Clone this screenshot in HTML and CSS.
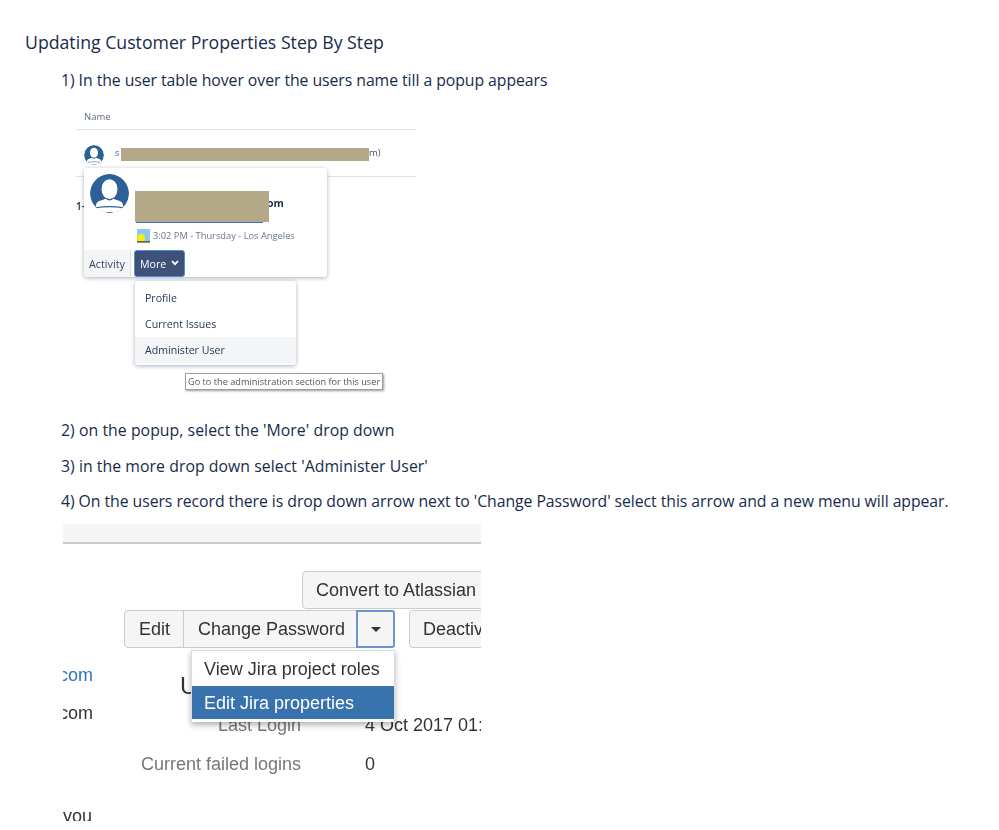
FILE: index.html
```html
<!DOCTYPE html>
<html lang="en">
<head>
<meta charset="utf-8">
<title>Updating Customer Properties Step By Step</title>
<link rel="stylesheet" href="styles.css">
</head>
<body>
<main class="doc">
  <p class="title">Updating Customer Properties Step By Step</p>
  <p class="step first">1) In the user table hover over the users name till a popup appears</p>

  <figure class="shot-one">
    <div class="th">Name</div>
    <div class="row">
      <svg class="avatar-sm" viewBox="0 0 40 40"><use href="#person"/></svg>
      <span class="user-link">s</span><span class="user-end">m)</span>
    </div>
    <div class="row-two">1-</div>
    <span class="redact redact-a"></span>

    <div class="card">
      <svg class="avatar-lg" viewBox="0 0 40 40">
        <defs>
          <clipPath id="disc"><circle cx="20" cy="20" r="20"/></clipPath>
          <g id="person" clip-path="url(#disc)">
            <circle cx="20" cy="20" r="20" fill="#2c6197"/>
            <ellipse cx="20" cy="15.5" rx="8.2" ry="10.2" fill="#fff"/>
            <path d="M6 39V33Q6 28 12 27L16 25.5Q20 29 24 25.5L28 27Q34 28 34 33V39Z" fill="#fff"/>
            <path d="M6 34Q20 31.5 34 34V35Q20 33 6 35Z" fill="#2c6197"/>
          </g>
        </defs>
        <use href="#person"/>
      </svg>
      <span class="card-end">om</span>
      <span class="card-mail"></span>
      <span class="redact redact-b"></span>
      <div class="card-time">
        <svg class="weather" viewBox="0 0 13 14"><rect width="13" height="14" fill="#8cc8ee"/><circle cx="4" cy="9" r="4" fill="#f2ee12"/><rect y="12" width="13" height="1.5" fill="#6b6a2a"/></svg>
        <span>3:02 PM - Thursday - Los Angeles</span>
      </div>
      <div class="card-actions">
        <span class="activity">Activity</span>
        <span class="more">More
          <svg class="chev" viewBox="0 0 8 6"><path d="M1 1.2 4 4.2 7 1.2" fill="none" stroke="#fff" stroke-width="1.8"/></svg>
        </span>
      </div>
    </div>

    <ul class="more-menu">
      <li>Profile</li>
      <li>Current Issues</li>
      <li class="hover">Administer User</li>
    </ul>
    <div class="tip">Go to the administration section for this user</div>
  </figure>

  <p class="step second">2) on the popup, select the 'More' drop down</p>
  <p class="step third">3) in the more drop down select 'Administer User'</p>
  <p class="step fourth">4) On the users record there is drop down arrow next to 'Change Password' select this arrow and a new menu will appear.</p>

  <figure class="shot-two">
    <div class="bar"></div>
    <div class="btn-row top"><span class="btn convert">Convert to Atlassian</span></div>
    <div class="btn-row">
      <span class="btn edit">Edit</span>
      <span class="btn change">Change Password</span>
      <span class="btn caret-btn"><i class="caret"></i></span>
      <span class="btn deact">Deactiv</span>
    </div>
    <span class="peek blue p1">com</span>
    <span class="peek p2">com</span>
    <span class="peek heading-u">U</span>
    <dl class="info">
      <div class="info-row"><dt>Last Login</dt><dd>4 Oct 2017 01:</dd></div>
      <div class="info-row"><dt>Current failed logins</dt><dd>0</dd></div>
    </dl>
    <span class="peek you">you</span>
    <ul class="jira-menu">
      <li>View Jira project roles</li>
      <li class="active">Edit Jira properties</li>
    </ul>
  </figure>
</main>
</body>
</html>
```

FILE: styles.css
```css
* { box-sizing: border-box; }
html, body { margin: 0; padding: 0; background: #fff; }
body { height: 830px; overflow: hidden; font-family: "Open Sans", "Noto Sans", sans-serif; color: #172b4d; }
.doc { padding: 30px 0 0 25px; }
p { margin: 0; }
.title { font-size: 17.7px; line-height: 24px; }
.step { font-size: 15.8px; line-height: 24px; margin: 12px 0 0 36px; letter-spacing: -0.06px; white-space: nowrap; }
.step.first { margin-top: 14px; }
.step.second { margin-top: 20px; letter-spacing: 0.05px; }
.step.third { letter-spacing: 0.05px; }
.step.fourth { margin-top: 11px; }

figure { margin: 0; position: relative; filter: blur(0.3px); }

/* first picture */
.shot-one { width: 340px; height: 293px; margin: 13px 0 0 51px; font-size: 10.4px; color: #42526e; }
.th { height: 25px; padding: 7px 0 0 8px; line-height: 10px; font-size: 9.5px; color: #5e6c84; border-bottom: 1px solid #dfe1e6; }
.row { height: 47px; position: relative; border-bottom: 1px solid #dfe1e6; }
.avatar-sm { position: absolute; left: 8px; top: 15px; width: 20px; height: 20px; }
.user-link { position: absolute; left: 39px; top: 16px; color: #3a6fc0; font-size: 9.5px; line-height: 14px; }
.user-end { position: absolute; left: 293px; top: 16px; font-size: 9.5px; line-height: 14px; }
.row-two { position: absolute; left: 0; top: 94px; font-size: 10px; font-weight: 600; color: #172b4d; }
.redact { position: absolute; background: #b3a888; }
.redact-a { left: 45px; top: 43px; width: 248px; height: 13px; }
.card { position: absolute; left: 8px; top: 63px; width: 243px; height: 109px; background: #fff; border-radius: 3px; box-shadow: 0 1px 4px rgba(9,30,66,.35); }
.avatar-lg { position: absolute; left: 6px; top: 6px; width: 39px; height: 39px; }
.card-end { position: absolute; left: 183px; top: 27px; font-size: 10.5px; line-height: 16px; font-weight: 700; color: #172b4d; }
.card-mail { position: absolute; left: 52px; top: 54px; width: 127px; height: 1px; background: #3a6fc0; }
.redact-b { left: 51px; top: 23px; width: 134px; height: 31px; }
.card-time { position: absolute; left: 53px; top: 61px; display: flex; align-items: center; gap: 3px; font-size: 9.3px; line-height: 14px; color: #6b778c; white-space: nowrap; }
.weather { width: 13px; height: 14px; display: block; }
.card-actions { position: absolute; left: 0; bottom: 0; height: 27px; display: flex; gap: 3px; }
.activity { width: 47px; background: #f4f5f7; border-radius: 0 0 0 3px; border-right: 1px solid #dfe1e6; font-size: 10.8px; line-height: 28px; padding-left: 5px; color: #344563; }
.more { width: 51px; background: #3d5179; border: 1px solid #4a90e2; border-radius: 3px; color: #fff; font-size: 10.6px; line-height: 25px; padding: 1px 0 0 5px; display: flex; align-items: center; gap: 5px; }
.chev { width: 8px; height: 6px; display: block; margin-top: -2px; }
.more-menu { position: absolute; left: 59px; top: 176px; width: 161px; height: 84px; margin: 0; padding: 4px 0; list-style: none; background: #fff; border-radius: 3px; box-shadow: 0 1px 4px rgba(9,30,66,.35); font-size: 10.6px; color: #253858; }
.more-menu li { height: 26px; line-height: 26px; padding-left: 10px; }
.more-menu .hover { background: #f4f5f7; }
.tip { position: absolute; left: 109px; top: 268px; width: 198px; height: 17px; background: #fff; border: 1px solid #a0a0a0; box-shadow: 1px 1px 2px rgba(0,0,0,.4); font-size: 9.2px; line-height: 16px; padding-left: 2px; color: #575757; white-space: nowrap; }

/* second picture */
.shot-two { width: 418px; height: 297px; margin: 11px 0 0 38px; overflow: hidden; font-family: "Liberation Sans", Arial, sans-serif; font-size: 18px; color: #333; }
.bar { height: 20px; background: #f5f5f5; border-bottom: 2px solid #ccc; }
.btn-row { display: flex; height: 38px; margin-top: 1px; }
.btn-row.top { margin-top: 27px; justify-content: flex-start; padding-left: 239px; }
.btn { display: block; flex: none; height: 38px; line-height: 36px; background: #f5f5f5; border: 1px solid #ccc; white-space: nowrap; }
.convert { width: 190px; padding-left: 13px; border-radius: 4px 0 0 4px; }
.edit { margin-left: 61px; width: 60px; padding-left: 14px; border-radius: 4px 0 0 4px; }
.change { width: 174px; margin-left: -1px; padding-left: 14px; }
.caret-btn { width: 39px; margin-left: -1px; border: 2px solid #6f94d2; background: #f5f5f5; display: flex; align-items: center; justify-content: center; border-radius: 0 3px 3px 0; }
.caret { width: 0; height: 0; border: 5px solid transparent; border-top-color: #333; border-bottom: 0; margin-top: 1px; }
.deact { margin-left: 14px; width: 100px; padding-left: 13px; border-radius: 4px 0 0 4px; }
.peek { position: absolute; line-height: 22px; }
.blue { color: #2f75b5; }
.p1 { left: -4px; top: 140px; }
.p2 { left: -4px; top: 178px; }
.heading-u { left: 117px; top: 149px; font-size: 24px; line-height: 26px; }
.you { left: 0; top: 281px; }
.info { position: absolute; left: 0; top: 188px; margin: 0; width: 418px; }
.info-row { display: flex; height: 39px; line-height: 26px; white-space: nowrap; }
.info dt { flex: none; width: 238px; text-align: right; color: #777; }
.info dd { flex: none; margin: 0 0 0 64px; }
.jira-menu { position: absolute; left: 128px; top: 126px; width: 204px; height: 72px; margin: 0; padding: 0; list-style: none; background: #fff; box-shadow: 0 3px 6px rgba(0,0,0,.3); border: 1px solid #ddd; border-bottom: 0; }
.jira-menu li { height: 35px; line-height: 36px; padding-left: 12px; white-space: nowrap; }
.jira-menu .active { height: 33px; line-height: 34px; background: #3873ae; color: #fff; }
```
